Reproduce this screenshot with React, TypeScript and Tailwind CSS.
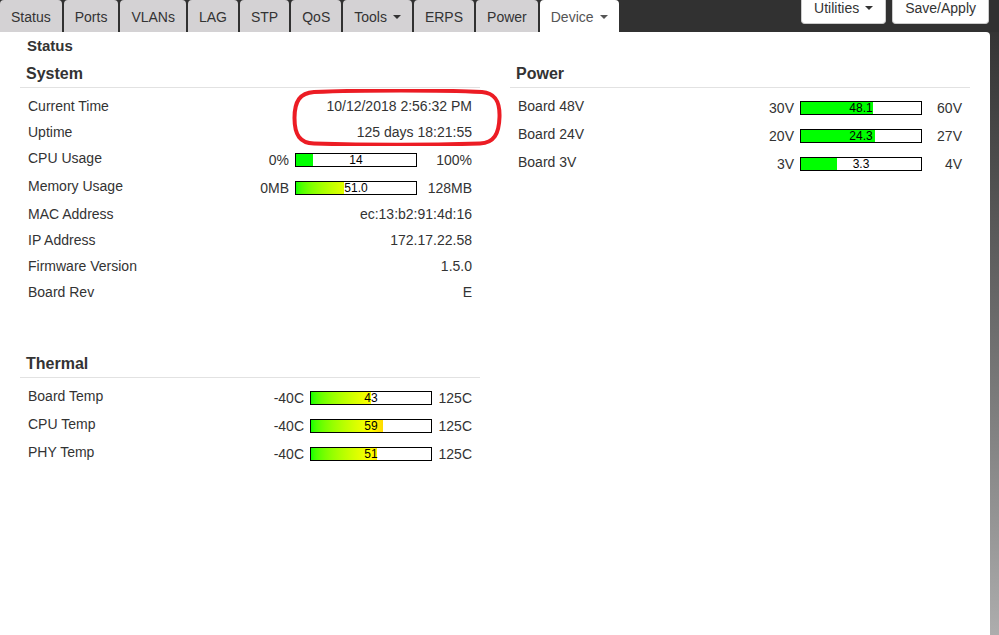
import React from "react";

type Tab = { label: string; caret?: boolean; active?: boolean };

const tabs: Tab[] = [
  { label: "Status" },
  { label: "Ports" },
  { label: "VLANs" },
  { label: "LAG" },
  { label: "STP" },
  { label: "QoS" },
  { label: "Tools", caret: true },
  { label: "ERPS" },
  { label: "Power" },
  { label: "Device", caret: true, active: true },
];

function Caret() {
  return (
    <span className="ml-[6px] inline-block h-0 w-0 border-x-[4px] border-t-[4px] border-x-transparent border-t-current align-middle" />
  );
}

type BarProps = {
  min: string;
  max: string;
  value: string;
  pct: number;
  kind: "solid" | "heat";
  maxW: string;
};

function Bar({ min, max, value, pct, kind, maxW }: BarProps) {
  return (
    <div className="flex items-center">
      <span className="mr-[6px] text-right">{min}</span>
      <div className="relative h-[14px] w-[122px] border border-black bg-white">
        <div className="absolute inset-y-0 left-0 overflow-hidden" style={{ width: `${pct}%` }}>
          {kind === "solid" ? (
            <div className="h-full w-[120px] bg-[#00ff00]" />
          ) : (
            <div className="h-full w-[120px] bg-linear-to-r from-[#00ff00] via-[#ffff00] to-[#ff0000]" />
          )}
        </div>
        <div className="absolute inset-0 flex items-center justify-center text-[12px] leading-[12px] text-black">
          {value}
        </div>
      </div>
      <span className={`${maxW} text-right`}>{max}</span>
    </div>
  );
}

function Row({ label, children, tall }: { label: string; children: React.ReactNode; tall?: boolean }) {
  return (
    <div className={`flex items-center justify-between px-[8px] ${tall ? "h-[28px]" : "h-[26px]"}`}>
      <span className={tall ? "pb-[3px]" : "pb-[2px]"}>{label}</span>
      {tall ? children : <span className="pb-[2px]">{children}</span>}
    </div>
  );
}

function SectionHeading({ title }: { title: string }) {
  return (
    <div className="border-b border-[#e2e2e2] pb-[3px] pl-[6px] pt-[2px] text-[16px] font-bold leading-[20px]">
      {title}
    </div>
  );
}

export default function App() {
  return (
    <div
      className="relative h-screen w-full overflow-hidden bg-linear-to-b from-[#2f2f2f] to-[#adadad] text-[14px] text-[#333]"
      style={{ fontFamily: '"Liberation Sans", Arial, sans-serif' }}
    >
      {/* top navigation */}
      <div className="flex h-[32px] items-end justify-between bg-[#313131] pr-[10px]">
        <nav className="flex h-[32px] gap-[2px]">
          {tabs.map((t) => (
            <div
              key={t.label}
              className={`flex h-[32px] items-center rounded-t-[4px] px-[11px] pt-[2px] ${
                t.active ? "bg-white text-[#555]" : "bg-[#d4d2d4] text-[#333]"
              }`}
            >
              {t.label}
              {t.caret && <Caret />}
            </div>
          ))}
        </nav>
        <div className="flex gap-[6px] self-start">
          <button className="flex h-[24px] items-start rounded-b-[4px] border-x border-b border-[#ccc] bg-white px-[12px] leading-[16px] text-[#333]">
            Utilities
            <span className="mt-[6px] ml-[6px] inline-block h-0 w-0 border-x-[4px] border-t-[4px] border-x-transparent border-t-current" />
          </button>
          <button className="flex h-[24px] items-start rounded-b-[4px] border-x border-b border-[#ccc] bg-white px-[12px] leading-[16px] text-[#333]">
            Save/Apply
          </button>
        </div>
      </div>

      {/* content panel */}
      <div className="h-[603px] w-[990px] rounded-tr-[4px] bg-white px-[20px] pt-[4px]">
        <div className="pl-[7px] text-[15px] font-bold leading-[20px]">Status</div>

        <div className="mt-[6px] grid grid-cols-[460px_460px] gap-x-[30px]">
          {/* left column */}
          <div>
            <SectionHeading title="System" />
            <div className="pt-[6px]">
              <Row label="Current Time">10/12/2018 2:56:32 PM</Row>
              <Row label="Uptime">125 days 18:21:55</Row>
              <Row label="CPU Usage" tall>
                <Bar min="0%" max="100%" value="14" pct={14} kind="solid" maxW="w-[55px]" />
              </Row>
              <Row label="Memory Usage" tall>
                <Bar min="0MB" max="128MB" value="51.0" pct={39.8} kind="heat" maxW="w-[55px]" />
              </Row>
              <Row label="MAC Address">ec:13:b2:91:4d:16</Row>
              <Row label="IP Address">172.17.22.58</Row>
              <Row label="Firmware Version">1.5.0</Row>
              <Row label="Board Rev">E</Row>
            </div>

            <div className="mt-[46px]">
              <SectionHeading title="Thermal" />
              <div className="pt-[6px]">
                <Row label="Board Temp" tall>
                  <Bar min="-40C" max="125C" value="43" pct={50.3} kind="heat" maxW="w-[40px]" />
                </Row>
                <Row label="CPU Temp" tall>
                  <Bar min="-40C" max="125C" value="59" pct={60} kind="heat" maxW="w-[40px]" />
                </Row>
                <Row label="PHY Temp" tall>
                  <Bar min="-40C" max="125C" value="51" pct={55.2} kind="heat" maxW="w-[40px]" />
                </Row>
              </div>
            </div>
          </div>

          {/* right column */}
          <div>
            <SectionHeading title="Power" />
            <div className="pt-[6px]">
              <Row label="Board 48V" tall>
                <Bar min="30V" max="60V" value="48.1" pct={60.3} kind="solid" maxW="w-[40px]" />
              </Row>
              <Row label="Board 24V" tall>
                <Bar min="20V" max="27V" value="24.3" pct={61.4} kind="solid" maxW="w-[40px]" />
              </Row>
              <Row label="Board 3V" tall>
                <Bar min="3V" max="4V" value="3.3" pct={30} kind="solid" maxW="w-[40px]" />
              </Row>
            </div>
          </div>
        </div>
      </div>

      {/* red highlight around the clock values */}
      <svg
        className="pointer-events-none absolute left-[292px] top-[89px]"
        width="210"
        height="57"
        viewBox="0 0 210 57"
      >
        <path
          d="M22 3 C70 1 150 1 190 3 C203 4 208 12 207.5 28 C207 45 202 54 188 54.5 C140 56 70 56 22 54.5 C8 54 2.5 46 2.5 29 C2.5 12 8 4 22 3 Z"
          fill="none"
          stroke="#ec1c24"
          strokeWidth="4"
        />
      </svg>
    </div>
  );
}
